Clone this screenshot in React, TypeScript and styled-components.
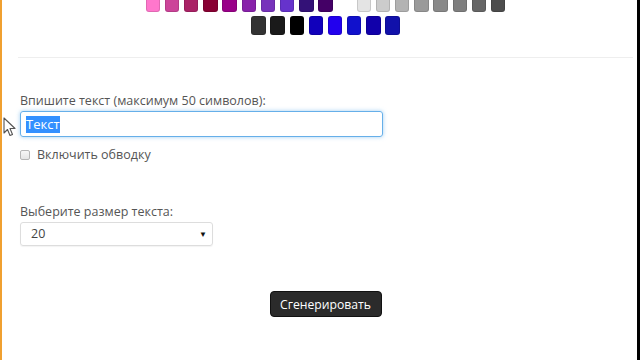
import styled, { createGlobalStyle } from "styled-components";

const GlobalStyle = createGlobalStyle`
  html, body {
    margin: 0;
    padding: 0;
    background: #ffffff;
    overflow: hidden;
  }
  body {
    font-family: "Open Sans", "Liberation Sans", sans-serif;
  }
`;

const palette = [
  "#ff77cc", "#cc4499", "#aa2266", "#880033", "#990088",
  "#8822aa", "#7733bb", "#6633cc", "#331177", "#440066",
  "#ffffff", "#e4e4e4", "#cccccc", "#b3b3b3", "#9a9a9a",
  "#898989", "#7f7f7f", "#666666", "#4d4d4d",
  "#333333", "#1a1a1a", "#000000", "#1100bb", "#2200ee",
  "#1111cc", "#1100aa", "#1111aa",
];

export default function App() {
  return (
    <>
      <GlobalStyle />
      <Frame>
        <Content>
          <Palette>
            {palette.map((color, index) => (
              <Swatch key={`${color}-${index}`} $color={color} $blank={color === "#ffffff"} />
            ))}
          </Palette>
          <Divider />

          <FieldLabel>Впишите текст (максимум 50 символов):</FieldLabel>
          <TextBox>
            <Selected>Текст</Selected>
          </TextBox>

          <CheckRow>
            <CheckBox />
            <span>Включить обводку</span>
          </CheckRow>

          <SizeLabel>Выберите размер текста:</SizeLabel>
          <SelectBox>
            <span>20</span>
            <Arrow>▼</Arrow>
          </SelectBox>

          <ButtonRow>
            <GenerateButton>Сгенерировать</GenerateButton>
          </ButtonRow>
        </Content>

        <Cursor width="14" height="20" viewBox="0 0 14 20">
          <path
            d="M1 1 L1 16 L4.5 12.5 L7 18.5 L9.5 17.5 L7 11.5 L12 11.5 Z"
            fill="#ffffff"
            stroke="#555555"
            strokeWidth="1.1"
            strokeLinejoin="round"
          />
        </Cursor>
      </Frame>
    </>
  );
}

const Frame = styled.div`
  position: relative;
  height: 360px;
  display: flex;
  border-left: 2px solid #f0a030;
  border-right: 3px solid #000000;
  box-sizing: border-box;
  background: #ffffff;
`;

const Content = styled.div`
  flex: 1;
  display: flex;
  flex-direction: column;
  align-items: flex-start;
  padding: 0 4px 0 16px;
  font-size: 12.5px;
  line-height: 18px;
  color: #555555;
`;

const Palette = styled.div`
  align-self: center;
  width: 365px;
  margin-top: -7px;
  display: flex;
  flex-wrap: wrap;
  justify-content: center;
`;

const Swatch = styled.div<{ $color: string; $blank: boolean }>`
  width: 14.4px;
  height: 19px;
  margin: 0 2.4px 4px;
  border-radius: 3px;
  background: ${(props) => props.$color};
  box-shadow: ${(props) =>
    props.$blank ? "none" : "inset 0 0 0 1px rgba(0, 0, 0, 0.12)"};
`;

const Divider = styled.div`
  align-self: stretch;
  height: 1px;
  margin-top: 18px;
  background: #eeeeee;
`;

const FieldLabel = styled.div`
  margin: 34px 0 1px 2px;
`;

const TextBox = styled.div`
  width: 363px;
  height: 26px;
  margin-left: 2px;
  box-sizing: border-box;
  display: flex;
  align-items: center;
  padding: 0 5px;
  border: 1px solid #66afe9;
  border-radius: 3px;
  box-shadow: 0 0 4px rgba(102, 175, 233, 0.6);
  font-size: 13px;
`;

const Selected = styled.span`
  background: #3390ff;
  color: #ffffff;
  line-height: 17px;
`;

const CheckRow = styled.label`
  margin: 9px 0 0 2px;
  display: flex;
  align-items: center;
  gap: 7px;
`;

const CheckBox = styled.span`
  width: 10px;
  height: 10px;
  box-sizing: border-box;
  border: 1px solid #b5b5b5;
  border-radius: 2px;
  background: linear-gradient(#f6f6f6, #e4e4e4);
`;

const SizeLabel = styled.div`
  margin: 39px 0 1px 2px;
`;

const SelectBox = styled.div`
  width: 193px;
  height: 24px;
  margin-left: 2px;
  box-sizing: border-box;
  display: flex;
  align-items: center;
  justify-content: space-between;
  padding: 0 5px 0 10px;
  border: 1px solid #dddddd;
  border-radius: 3px;
  box-shadow: 0 1px 1px rgba(0, 0, 0, 0.05);
  color: #444444;
`;

const Arrow = styled.span`
  font-size: 8px;
  color: #111111;
`;

const ButtonRow = styled.div`
  align-self: stretch;
  display: flex;
  justify-content: center;
  margin-top: 45px;
`;

const GenerateButton = styled.button`
  width: 112px;
  height: 26px;
  border: 1px solid #111111;
  border-radius: 4px;
  background: #2b2b2b;
  color: #ffffff;
  font-family: "Open Sans", "Liberation Sans", sans-serif;
  font-size: 12.2px;
  padding: 0;
`;

const Cursor = styled.svg`
  position: absolute;
  left: 1px;
  top: 117px;
`;
